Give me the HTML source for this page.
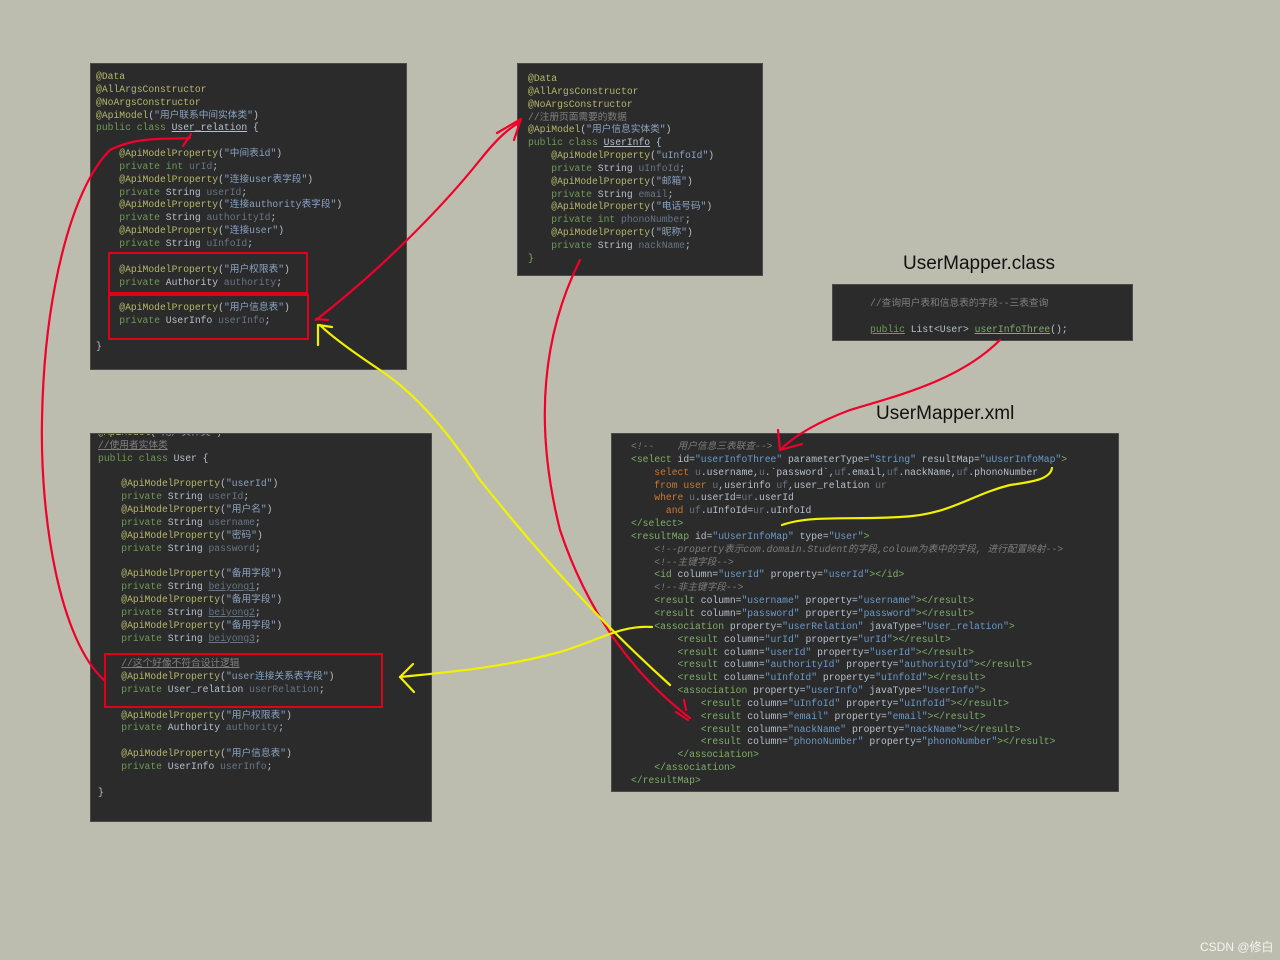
<!DOCTYPE html>
<html><head><meta charset="utf-8"><style>
body{margin:0;width:1280px;height:960px;background:#bdbdaf;position:relative;overflow:hidden;font-family:"Liberation Mono","Noto Sans CJK SC",monospace;}
.p{position:absolute;background:#2b2b2b;border:1px solid #4a4a4a;box-sizing:border-box;overflow:hidden}
pre{position:absolute;margin:0;font-family:"Liberation Mono","Noto Sans CJK SC",monospace;font-size:9.7px;line-height:12.85px;color:#b4c0cc;white-space:pre}
.a{color:#b3b86a}.k{color:#6e9a58}.s{color:#8aa3c2}.f{color:#667685}.c{color:#7d7d7d;font-style:italic}.t{color:#7fae6a}.v{color:#6b9ac9}.o{color:#cc7832}.g{color:#808080}
.rb{position:absolute;border:2px solid #e0001b;box-sizing:border-box}
.title{position:absolute;font-family:"Liberation Sans",sans-serif;font-size:19px;color:#111}
</style></head><body>

<div class="p" style="left:90px;top:63px;width:317px;height:307px"></div>
<pre style="left:96px;top:71px"><span class="a">@Data
@AllArgsConstructor
@NoArgsConstructor
@ApiModel</span>(<span class="s">"用户联系中间实体类"</span>)
<span class="k">public class</span> <u>User_relation</u> {

    <span class="a">@ApiModelProperty</span>(<span class="s">"中间表id"</span>)
    <span class="k">private int</span> <span class="f">urId</span>;
    <span class="a">@ApiModelProperty</span>(<span class="s">"连接user表字段"</span>)
    <span class="k">private</span> String <span class="f">userId</span>;
    <span class="a">@ApiModelProperty</span>(<span class="s">"连接authority表字段"</span>)
    <span class="k">private</span> String <span class="f">authorityId</span>;
    <span class="a">@ApiModelProperty</span>(<span class="s">"连接user"</span>)
    <span class="k">private</span> String <span class="f">uInfoId</span>;

    <span class="a">@ApiModelProperty</span>(<span class="s">"用户权限表"</span>)
    <span class="k">private</span> Authority <span class="f">authority</span>;

    <span class="a">@ApiModelProperty</span>(<span class="s">"用户信息表"</span>)
    <span class="k">private</span> UserInfo <span class="f">userInfo</span>;

}</pre>
<div class="rb" style="left:108px;top:252px;width:200px;height:42px"></div>
<div class="rb" style="left:108px;top:294px;width:201px;height:46px"></div>

<div class="p" style="left:517px;top:63px;width:246px;height:213px"></div>
<pre style="left:528px;top:73px"><span class="a">@Data
@AllArgsConstructor
@NoArgsConstructor</span>
<span class="g">//注册页面需要的数据</span>
<span class="a">@ApiModel</span>(<span class="s">"用户信息实体类"</span>)
<span class="k">public class</span> <u>UserInfo</u> {
    <span class="a">@ApiModelProperty</span>(<span class="s">"uInfoId"</span>)
    <span class="k">private</span> String <span class="f">uInfoId</span>;
    <span class="a">@ApiModelProperty</span>(<span class="s">"邮箱"</span>)
    <span class="k">private</span> String <span class="f">email</span>;
    <span class="a">@ApiModelProperty</span>(<span class="s">"电话号码"</span>)
    <span class="k">private int</span> <span class="f">phonoNumber</span>;
    <span class="a">@ApiModelProperty</span>(<span class="s">"昵称"</span>)
    <span class="k">private</span> String <span class="f">nackName</span>;
<span class="t">}</span></pre>

<div class="title" style="left:903px;top:253px">UserMapper.class</div>
<div class="p" style="left:832px;top:284px;width:301px;height:57px"></div>
<pre style="left:870px;top:298px"><span class="g">//查询用户表和信息表的字段--三表查询</span>

<span class="k"><u>public</u></span> List&lt;User&gt; <span class="t"><u>userInfoThree</u></span>();</pre>
<div class="title" style="left:876px;top:403px">UserMapper.xml</div>

<div class="p" style="left:90px;top:433px;width:342px;height:389px">
<pre style="left:7px;top:-7px"><span class="a">@ApiModel</span>(<span class="s">"用户实体类"</span>)
<span class="g"><u>//使用者实体类</u></span>
<span class="k">public class</span> User {

    <span class="a">@ApiModelProperty</span>(<span class="s">"userId"</span>)
    <span class="k">private</span> String <span class="f">userId</span>;
    <span class="a">@ApiModelProperty</span>(<span class="s">"用户名"</span>)
    <span class="k">private</span> String <span class="f">username</span>;
    <span class="a">@ApiModelProperty</span>(<span class="s">"密码"</span>)
    <span class="k">private</span> String <span class="f">password</span>;

    <span class="a">@ApiModelProperty</span>(<span class="s">"备用字段"</span>)
    <span class="k">private</span> String <span class="f"><u>beiyong1</u></span>;
    <span class="a">@ApiModelProperty</span>(<span class="s">"备用字段"</span>)
    <span class="k">private</span> String <span class="f"><u>beiyong2</u></span>;
    <span class="a">@ApiModelProperty</span>(<span class="s">"备用字段"</span>)
    <span class="k">private</span> String <span class="f"><u>beiyong3</u></span>;

    <span class="g"><u>//这个好像不符合设计逻辑</u></span>
    <span class="a">@ApiModelProperty</span>(<span class="s">"user连接关系表字段"</span>)
    <span class="k">private</span> User_relation <span class="f">userRelation</span>;

    <span class="a">@ApiModelProperty</span>(<span class="s">"用户权限表"</span>)
    <span class="k">private</span> Authority <span class="f">authority</span>;

    <span class="a">@ApiModelProperty</span>(<span class="s">"用户信息表"</span>)
    <span class="k">private</span> UserInfo <span class="f">userInfo</span>;

}</pre></div>
<div class="rb" style="left:104px;top:653px;width:279px;height:55px"></div>

<div class="p" style="left:611px;top:433px;width:508px;height:359px"></div>
<pre style="left:631px;top:441px"><span class="c">&lt;!--    用户信息三表联查--&gt;</span>
<span class="t">&lt;select</span> id=<span class="v">"userInfoThree"</span> parameterType=<span class="v">"String"</span> resultMap=<span class="v">"uUserInfoMap"</span><span class="t">&gt;</span>
    <span class="o">select</span> <span class="f">u</span>.username,<span class="f">u</span>.`password`,<span class="f">uf</span>.email,<span class="f">uf</span>.nackName,<span class="f">uf</span>.phonoNumber
    <span class="o">from user</span> <span class="f">u</span>,userinfo <span class="f">uf</span>,user_relation <span class="f">ur</span>
    <span class="o">where</span> <span class="f">u</span>.userId=<span class="f">ur</span>.userId
      <span class="o">and</span> <span class="f">uf</span>.uInfoId=<span class="f">ur</span>.uInfoId
<span class="t">&lt;/select&gt;</span>
<span class="t">&lt;resultMap</span> id=<span class="v">"uUserInfoMap"</span> type=<span class="v">"User"</span><span class="t">&gt;</span>
    <span class="c">&lt;!--property表示com.domain.Student的字段,coloum为表中的字段, 进行配置映射--&gt;</span>
    <span class="c">&lt;!--主键字段--&gt;</span>
    <span class="t">&lt;id</span> column=<span class="v">"userId"</span> property=<span class="v">"userId"</span><span class="t">&gt;&lt;/id&gt;</span>
    <span class="c">&lt;!--非主键字段--&gt;</span>
    <span class="t">&lt;result</span> column=<span class="v">"username"</span> property=<span class="v">"username"</span><span class="t">&gt;&lt;/result&gt;</span>
    <span class="t">&lt;result</span> column=<span class="v">"password"</span> property=<span class="v">"password"</span><span class="t">&gt;&lt;/result&gt;</span>
    <span class="t">&lt;association</span> property=<span class="v">"userRelation"</span> javaType=<span class="v">"User_relation"</span><span class="t">&gt;</span>
        <span class="t">&lt;result</span> column=<span class="v">"urId"</span> property=<span class="v">"urId"</span><span class="t">&gt;&lt;/result&gt;</span>
        <span class="t">&lt;result</span> column=<span class="v">"userId"</span> property=<span class="v">"userId"</span><span class="t">&gt;&lt;/result&gt;</span>
        <span class="t">&lt;result</span> column=<span class="v">"authorityId"</span> property=<span class="v">"authorityId"</span><span class="t">&gt;&lt;/result&gt;</span>
        <span class="t">&lt;result</span> column=<span class="v">"uInfoId"</span> property=<span class="v">"uInfoId"</span><span class="t">&gt;&lt;/result&gt;</span>
        <span class="t">&lt;association</span> property=<span class="v">"userInfo"</span> javaType=<span class="v">"UserInfo"</span><span class="t">&gt;</span>
            <span class="t">&lt;result</span> column=<span class="v">"uInfoId"</span> property=<span class="v">"uInfoId"</span><span class="t">&gt;&lt;/result&gt;</span>
            <span class="t">&lt;result</span> column=<span class="v">"email"</span> property=<span class="v">"email"</span><span class="t">&gt;&lt;/result&gt;</span>
            <span class="t">&lt;result</span> column=<span class="v">"nackName"</span> property=<span class="v">"nackName"</span><span class="t">&gt;&lt;/result&gt;</span>
            <span class="t">&lt;result</span> column=<span class="v">"phonoNumber"</span> property=<span class="v">"phonoNumber"</span><span class="t">&gt;&lt;/result&gt;</span>
        <span class="t">&lt;/association&gt;</span>
    <span class="t">&lt;/association&gt;</span>
<span class="t">&lt;/resultMap&gt;</span></pre>

<svg width="1280" height="960" style="position:absolute;left:0;top:0" fill="none" stroke-linecap="round" stroke-linejoin="round">
<g stroke="#f0002a" stroke-width="2.2">
<path d="M104 680 C60 640 40 520 42 420 C44 300 70 190 110 150 C140 135 170 140 190 138"/>
<path d="M183 146 L191 134"/>
<path d="M316 320 C380 270 440 210 480 160 C500 135 510 128 520 122"/>
<path d="M497 133 L521 119 L514 140"/>
<path d="M316 319 L328 320"/>
<path d="M580 260 C540 340 535 430 560 530 C590 620 640 680 690 718"/>
<path d="M676 712 L688 720 M684 700 L686 710"/>
<path d="M1000 340 C960 380 900 395 850 410 C810 425 790 440 780 450"/>
<path d="M778 430 L780 450 L802 444"/>
</g>
<g stroke="#f2f200" stroke-width="2.2">
<path d="M670 685 C620 640 560 580 480 480 C440 420 410 390 380 370 C350 350 330 335 320 325"/>
<path d="M318 345 L318 325 L332 327"/>
<path d="M1052 468 C1050 480 1030 482 1010 485 C970 495 950 515 900 517 C850 520 810 515 782 525"/>
<path d="M652 627 C620 625 600 640 560 652 C500 668 450 672 400 677"/>
<path d="M413 664 L400 677 L414 692"/>
</g>
</svg>

<div style="position:absolute;left:1200px;top:938px;font-family:'Liberation Sans','Noto Sans CJK SC',sans-serif;font-size:12px;color:#f4f4f0">CSDN @修白</div>
</body></html>
